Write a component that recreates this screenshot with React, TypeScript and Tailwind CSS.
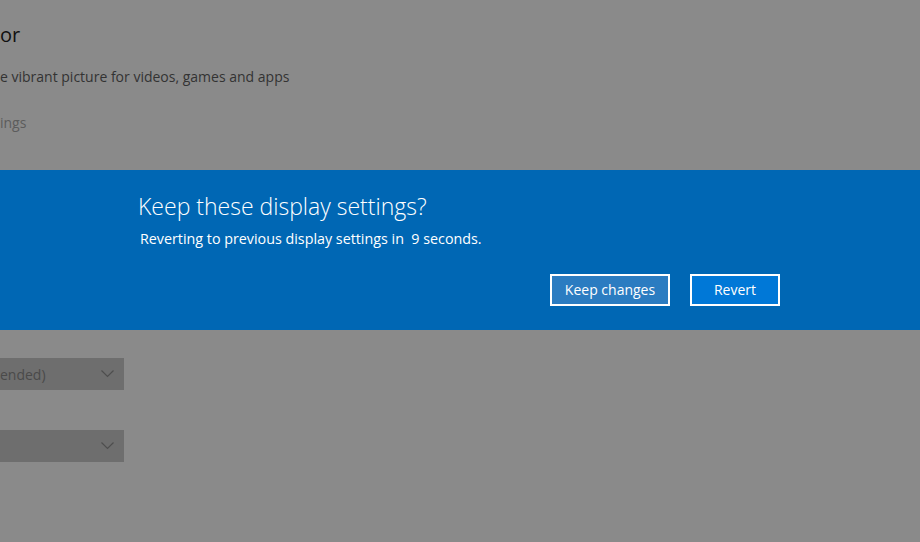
export default function App() {
  return (
    <div
      className="w-[920px] h-[542px] overflow-hidden bg-[#8a8a8a] flex flex-col"
      style={{ fontFamily: '"Open Sans", "Noto Sans", sans-serif' }}
    >
      {/* dimmed settings page behind the banner */}
      <div className="h-[170px] flex flex-col">
        <div className="mt-[21px] h-[28px] leading-[28px] text-[20px] text-[#111]">or</div>
        <div className="mt-[14px] h-[28px] leading-[28px] text-[14px] text-[#333]">
          e vibrant picture for videos, games and apps
        </div>
        <div className="mt-[18px] h-[28px] leading-[28px] text-[14px] text-[#5c5c5c]">ings</div>
      </div>

      {/* banner */}
      <div className="h-[160px] bg-[#0067b4] text-white pl-[138px] flex flex-col">
        <div className="mt-[21px] text-[23px] leading-[30px] font-light">
          Keep these display settings?
        </div>
        <div className="mt-[8px] pl-[2px] text-[14.3px] leading-[20px]">
          Reverting to previous display settings in&nbsp; 9 seconds.
        </div>
        <div className="mt-[25px] pl-[412px] flex gap-[20px]">
          <button className="w-[120px] h-[32px] border-2 border-white bg-[#2b7cc1] text-[14px] leading-none">
            Keep changes
          </button>
          <button className="w-[90px] h-[32px] border-2 border-white bg-[#0078d7] text-[14px] leading-none">
            Revert
          </button>
        </div>
      </div>

      {/* dropdowns */}
      <div className="mt-[28px] flex flex-col gap-[40px]">
        <Dropdown label="ended)" />
        <Dropdown label="" />
      </div>
    </div>
  );
}

function Dropdown({ label }: { label: string }) {
  return (
    <div className="w-[124px] h-[32px] bg-[#6e6e6e] flex items-center justify-between pr-[10px]">
      <span className="text-[14px] text-[#4a4a4a]">{label}</span>
      <svg width="13" height="8" viewBox="0 0 13 8" fill="none">
        <path d="M0.5 0.5 L6.5 6.5 L12.5 0.5" stroke="#4e4e4e" strokeWidth="1.2" />
      </svg>
    </div>
  );
}
